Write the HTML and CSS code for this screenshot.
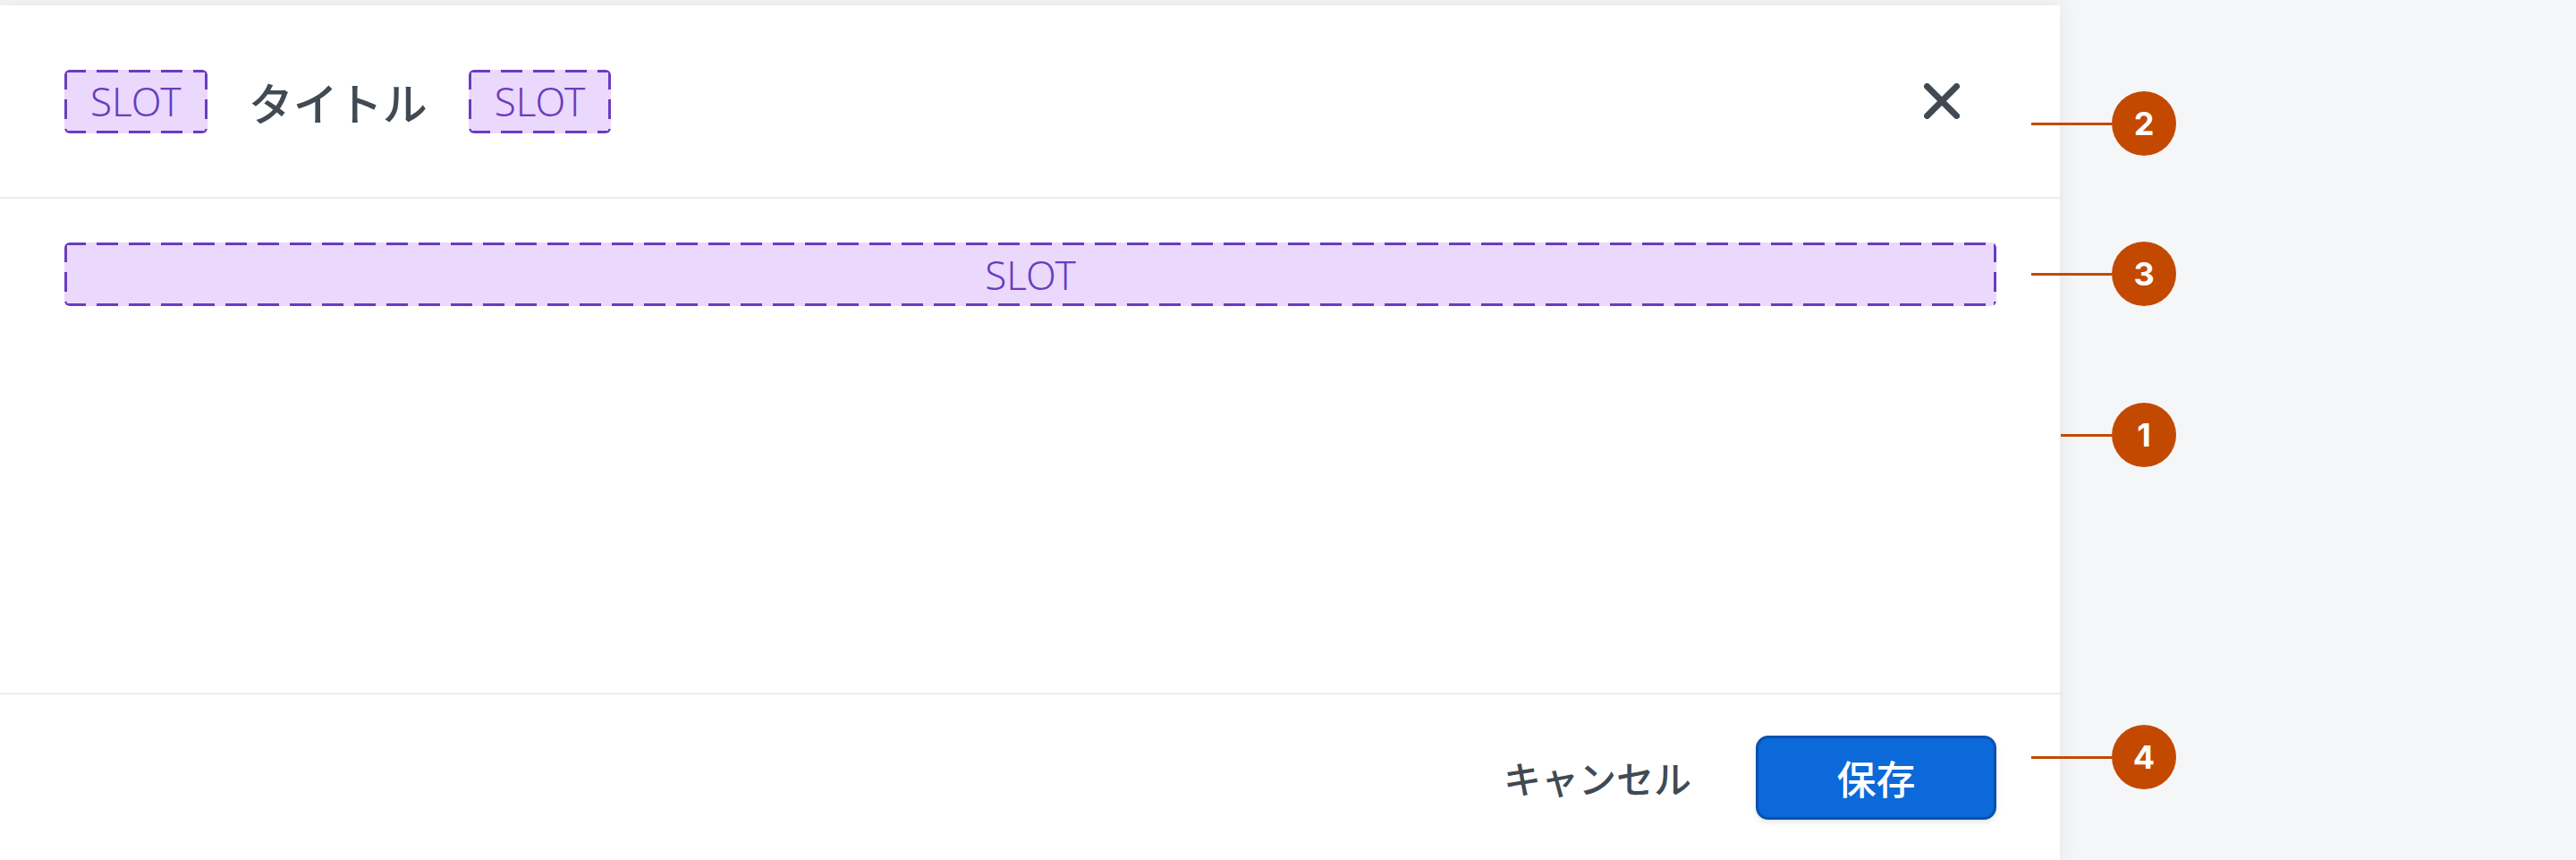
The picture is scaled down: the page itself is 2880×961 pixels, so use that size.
FILE: index.html
```html
<!DOCTYPE html>
<html lang="ja">
<head>
    <meta charset="UTF-8">
    <meta name="viewport" content="width=device-width, initial-scale=1.0">
    <title>Drawer</title>
    <link rel="stylesheet" href="styles.css">
</head>
<body>
    <div class="stage">
        <section class="panel">
            <header class="panel-header">
                <span class="slot">SLOT</span>
                <h1 class="panel-title">タイトル</h1>
                <span class="slot">SLOT</span>
                <button class="close-btn" type="button" aria-label="閉じる">
                    <svg width="40" height="40" viewBox="0 0 40 40">
                        <path d="M3.5 3.5 L36.5 36.5 M36.5 3.5 L3.5 36.5" stroke="#414a53" stroke-width="7" stroke-linecap="round" fill="none"/>
                    </svg>
                </button>
            </header>

            <div class="panel-body">
                <div class="slot slot-wide">SLOT</div>
            </div>

            <footer class="panel-footer">
                <button class="btn-ghost" type="button">キャンセル</button>
                <button class="btn-primary" type="button">保存</button>
            </footer>
        </section>

        <!-- annotation markers -->
        <div class="marker marker-2"><span class="marker-line"></span><span class="marker-dot">2</span></div>
        <div class="marker marker-3"><span class="marker-line"></span><span class="marker-dot">3</span></div>
        <div class="marker marker-1"><span class="marker-line short"></span><span class="marker-dot">1</span></div>
        <div class="marker marker-4"><span class="marker-line"></span><span class="marker-dot">4</span></div>
    </div>
</body>
</html>
```

FILE: styles.css
```css
* {
    box-sizing: border-box;
}

body {
    margin: 0;
    padding: 0;
    background-color: #f5f6f8;
    font-family: "Noto Sans", "Noto Sans CJK JP", sans-serif;
    color: #414a53;
    overflow: hidden;
}

.stage {
    position: relative;
    height: 961px;
    padding-top: 6px;
}

.panel {
    width: 2303px;
    height: 955px;
    background: #ffffff;
    display: flex;
    flex-direction: column;
    box-shadow: 0 0 22px rgba(30, 40, 60, 0.09);
}

.panel-header {
    height: 216px;
    flex-shrink: 0;
    display: flex;
    align-items: center;
    gap: 46px;
    padding: 0 72px;
    border-bottom: 2px solid #e9ecf0;
}

.panel-title {
    margin: 0;
    font-family: "Noto Sans CJK JP", sans-serif;
    font-size: 50px;
    font-weight: 500;
    line-height: 1;
    color: #414a53;
}

.slot {
    display: flex;
    align-items: center;
    justify-content: center;
    height: 71px;
    padding: 0 29px;
    border-radius: 6px;
    font-size: 44px;
    font-weight: 300;
    line-height: 1;
    color: #6a3cbf;
    background:
        repeating-linear-gradient(90deg, #6a3cbf 0 24px, transparent 24px 36px) top left / 100% 3px no-repeat,
        repeating-linear-gradient(90deg, #6a3cbf 0 24px, transparent 24px 36px) bottom left / 100% 3px no-repeat,
        repeating-linear-gradient(180deg, #6a3cbf 0 22px, transparent 22px 33px) top left / 3px 100% no-repeat,
        repeating-linear-gradient(180deg, #6a3cbf 0 22px, transparent 22px 33px) top right / 3px 100% no-repeat,
        #ebd8fd;
}

.slot-wide {
    width: 100%;
}

.close-btn {
    margin-left: auto;
    margin-right: 28px;
    padding: 12px;
    border: none;
    background: none;
    display: flex;
    cursor: pointer;
}

.panel-body {
    flex: 1;
    padding: 49px 71px 0 72px;
}

.panel-footer {
    height: 187px;
    flex-shrink: 0;
    display: flex;
    align-items: center;
    justify-content: flex-end;
    gap: 36px;
    padding: 0 71px 0 72px;
    border-top: 2px solid #e9ecf0;
}

.btn-ghost,
.btn-primary {
    font-family: "Noto Sans CJK JP", sans-serif;
    font-size: 42px;
    font-weight: 500;
    line-height: 1;
    cursor: pointer;
}

.btn-ghost {
    background: none;
    border: none;
    color: #414a53;
    padding: 0 36px;
}

.btn-primary {
    width: 269px;
    height: 94px;
    background-color: #0b69d9;
    border: 3px solid #0a51ad;
    border-radius: 14px;
    color: #ffffff;
    font-size: 44px;
    box-shadow: 0 3px 6px rgba(0, 0, 0, 0.1);
}

.marker {
    position: absolute;
    left: 2271px;
    display: flex;
    align-items: center;
    height: 72px;
    margin-top: -36px;
}

.marker-2 { top: 138px; }
.marker-3 { top: 306px; }
.marker-1 { top: 486px; left: 2304px; }
.marker-4 { top: 846px; }

.marker-line {
    width: 90px;
    height: 3px;
    background-color: #c44900;
}

.marker-line.short {
    width: 57px;
}

.marker-dot {
    width: 72px;
    height: 72px;
    border-radius: 50%;
    background-color: #c44900;
    color: #ffffff;
    font-family: Inter, "Noto Sans", sans-serif;
    font-weight: 700;
    font-size: 36px;
    display: flex;
    align-items: center;
    justify-content: center;
}
```
